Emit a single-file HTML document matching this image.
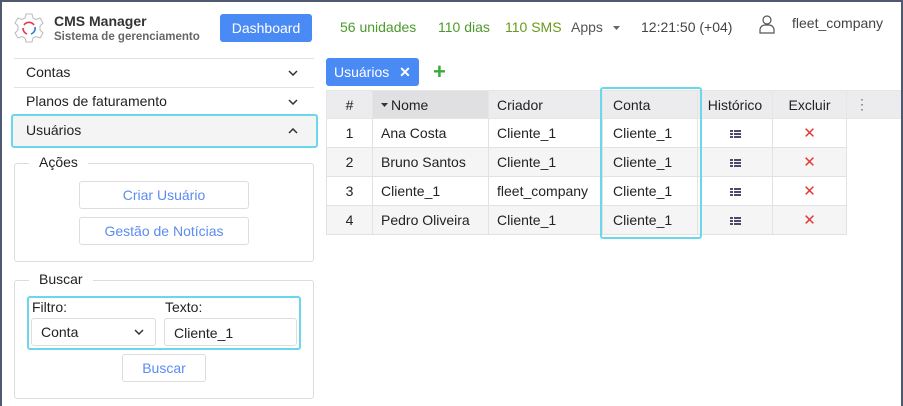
<!DOCTYPE html>
<html><head><meta charset="utf-8"><style>
*{box-sizing:border-box;margin:0;padding:0}
body{width:903px;height:406px;overflow:hidden;background:#fff;font-family:"Liberation Sans",Roboto,sans-serif;color:#222;position:relative;font-size:14px}
.frame{position:absolute;left:0;top:0;width:903px;height:406px;border-left:2px solid #4e5a70;border-top:2px solid #4e5a70;border-right:2px solid #4e5a70}
.a{position:absolute;white-space:nowrap}
.btn{position:absolute;border:1px solid #ddd;border-radius:3px;color:#5b8cf0;text-align:center;font-size:14px;background:#fff}
.fs{position:absolute;border:1px solid #ddd;border-radius:3px}
.leg{position:absolute;background:#fff;padding:0 10px;font-size:14px;color:#222}
table{position:absolute;left:326px;top:90px;border-collapse:collapse;font-size:14px}
td,th{height:29px;border:1px solid #e2e2e2;padding:0 8px;text-align:left;font-weight:normal}
th{background:#ececee;color:#222;height:28px;border-color:#e6e6e6}
tr.e td{background:#f5f5f5}
.c{text-align:center}
.x{color:#e53935;font-size:15px}
.ic{display:inline-block;width:11px;height:8px;background:linear-gradient(#4a4a6a 0 2px,transparent 2px 3px,#4a4a6a 3px 5px,transparent 5px 6px,#4a4a6a 6px 8px);position:relative}
.ic:after{content:"";position:absolute;left:3px;top:0;width:1px;height:8px;background:#fff}
</style></head><body>
<div class="frame"></div>
<svg class="a" style="left:13px;top:12px" width="32" height="34" viewBox="0 0 32 34">
<path d="M13 2h6l1 4 3 1.5 4-1.5 3 5-3 3v4l3 3-3 5-4-1.5-3 1.5-1 4h-6l-1-4-3-1.5-4 1.5-3-5 3-3v-4l-3-3 3-5 4 1.5 3-1.5z" fill="none" stroke="#bbb" stroke-width="1"/>
<path d="M11 13a6 6 0 0 1 10 0" fill="none" stroke="#e03a4a" stroke-width="1.6"/>
<path d="M10 16a6 6 0 0 0 4 6" fill="none" stroke="#e03a4a" stroke-width="1.6"/>
<path d="M22 15a6 6 0 0 1-4 7" fill="none" stroke="#3a7ad8" stroke-width="1.6"/>
</svg>
<div class="a" style="left:54px;top:13px;font-size:14px;font-weight:bold;color:#333">CMS Manager</div>
<div class="a" style="left:54px;top:31px;font-size:11.5px;font-weight:bold;color:#666">Sistema de gerenciamento</div>
<div class="a" style="left:220px;top:14px;width:92px;height:28px;background:#4a8af4;border-radius:3px;color:#fff;font-size:14px;text-align:center;line-height:28px">Dashboard</div>
<div class="a" style="left:340px;top:19px;color:#4c9a2a;font-size:14px">56 unidades</div>
<div class="a" style="left:438px;top:19px;color:#4c9a2a;font-size:14px">110 dias</div>
<div class="a" style="left:505px;top:19px;color:#6a9a1a;font-size:14px">110 SMS</div>
<div class="a" style="left:571px;top:19px;color:#555;font-size:14px">Apps</div>
<svg class="a" style="left:613px;top:26px" width="7" height="5"><path d="M0 0h7L3.5 4z" fill="#666"/></svg>
<div class="a" style="left:641px;top:19px;color:#444;font-size:14px">12:21:50 (+04)</div>
<svg class="a" style="left:759px;top:14px" width="16" height="20" viewBox="0 0 16 20"><circle cx="8" cy="6" r="4" fill="none" stroke="#555" stroke-width="1.2"/><path d="M1 19v-3a5 5 0 0 1 5-5h4a5 5 0 0 1 5 5v3z" fill="none" stroke="#555" stroke-width="1.2"/></svg>
<div class="a" style="left:792px;top:15px;color:#444;font-size:14px">fleet_company</div>

<div class="a" style="left:14px;top:58px;width:300px;height:1px;background:#e2e2e2"></div>
<div class="a" style="left:26px;top:64px">Contas</div>
<svg class="a" style="left:288px;top:70px" width="10" height="6"><path d="M1 1l4 4 4-4" fill="none" stroke="#333" stroke-width="1.5"/></svg>
<div class="a" style="left:14px;top:87px;width:300px;height:1px;background:#e2e2e2"></div>
<div class="a" style="left:26px;top:93px">Planos de faturamento</div>
<svg class="a" style="left:288px;top:99px" width="10" height="6"><path d="M1 1l4 4 4-4" fill="none" stroke="#333" stroke-width="1.5"/></svg>
<div class="a" style="left:11px;top:114px;width:307px;height:34px;border:2px solid #6ad8ea;border-radius:3px;background:#f4f4f4"></div>
<div class="a" style="left:26px;top:122px">Usuários</div>
<svg class="a" style="left:288px;top:128px" width="10" height="6"><path d="M1 5l4-4 4 4" fill="none" stroke="#333" stroke-width="1.5"/></svg>

<div class="fs" style="left:14px;top:163px;width:300px;height:99px"></div>
<div class="leg" style="left:29px;top:154px">Ações</div>
<div class="btn" style="left:79px;top:181px;width:170px;height:28px;line-height:26px">Criar Usuário</div>
<div class="btn" style="left:79px;top:217px;width:170px;height:28px;line-height:26px">Gestão de Notícias</div>

<div class="fs" style="left:14px;top:280px;width:300px;height:119px"></div>
<div class="leg" style="left:29px;top:271px">Buscar</div>
<div class="a" style="left:27px;top:296px;width:274px;height:54px;border:2px solid #6ad8ea;border-radius:3px"></div>
<div class="a" style="left:32px;top:299px">Filtro:</div>
<div class="a" style="left:165px;top:299px">Texto:</div>
<div class="a" style="left:31px;top:318px;width:125px;height:28px;border:1px solid #ddd;border-radius:3px;padding:5px 9px">Conta</div>
<svg class="a" style="left:134px;top:329px" width="10" height="6"><path d="M1 1l4 4 4-4" fill="none" stroke="#333" stroke-width="1.5"/></svg>
<div class="a" style="left:164px;top:318px;width:133px;height:28px;border:1px solid #ddd;border-radius:3px;padding:6px 9px">Cliente_1</div>
<div class="btn" style="left:122px;top:354px;width:84px;height:28px;line-height:26px">Buscar</div>

<div class="a" style="left:326px;top:58px;width:93px;height:28px;background:#4a8af4;border-radius:3px;color:#fff;line-height:28px;padding-left:8px">Usuários <span style="margin-left:6px;font-weight:bold">✕</span></div>
<div class="a" style="left:433px;top:58px;color:#3aaa3a;font-size:22px;font-weight:bold;line-height:28px">+</div>

<div class="a" style="left:326px;top:90px;width:574px;height:28px;background:#ececee"></div>
<table>
<tr><th class="c" style="width:46px">#</th><th style="width:116px;background:#e0e0e3"><svg width="7" height="5" style="margin-right:3px;vertical-align:2px"><path d="M0 0h7L3.5 4z" fill="#333"/></svg>Nome</th><th style="width:114px">Criador</th><th style="width:95px;padding-left:10px">Conta</th><th class="c" style="width:75px;padding:0">Histórico</th><th class="c" style="width:74px">Excluir</th><th style="width:54px;border-right:none;color:#777">⋮</th></tr>
<tr><td class="c">1</td><td>Ana Costa</td><td>Cliente_1</td><td style="padding-left:10px">Cliente_1</td><td class="c"><span class="ic"></span></td><td class="c x">✕</td><td style="border:none;background:#fff"></td></tr>
<tr class="e"><td class="c">2</td><td>Bruno Santos</td><td>Cliente_1</td><td style="padding-left:10px">Cliente_1</td><td class="c"><span class="ic"></span></td><td class="c x">✕</td><td style="border:none;background:#fff"></td></tr>
<tr><td class="c">3</td><td>Cliente_1</td><td>fleet_company</td><td style="padding-left:10px">Cliente_1</td><td class="c"><span class="ic"></span></td><td class="c x">✕</td><td style="border:none;background:#fff"></td></tr>
<tr class="e"><td class="c">4</td><td>Pedro Oliveira</td><td>Cliente_1</td><td style="padding-left:10px">Cliente_1</td><td class="c"><span class="ic"></span></td><td class="c x">✕</td><td style="border:none;background:#fff"></td></tr>
</table>
<div class="a" style="left:600px;top:87px;width:102px;height:152px;border:2px solid #6ad8ea;border-radius:3px"></div>
</body></html>
